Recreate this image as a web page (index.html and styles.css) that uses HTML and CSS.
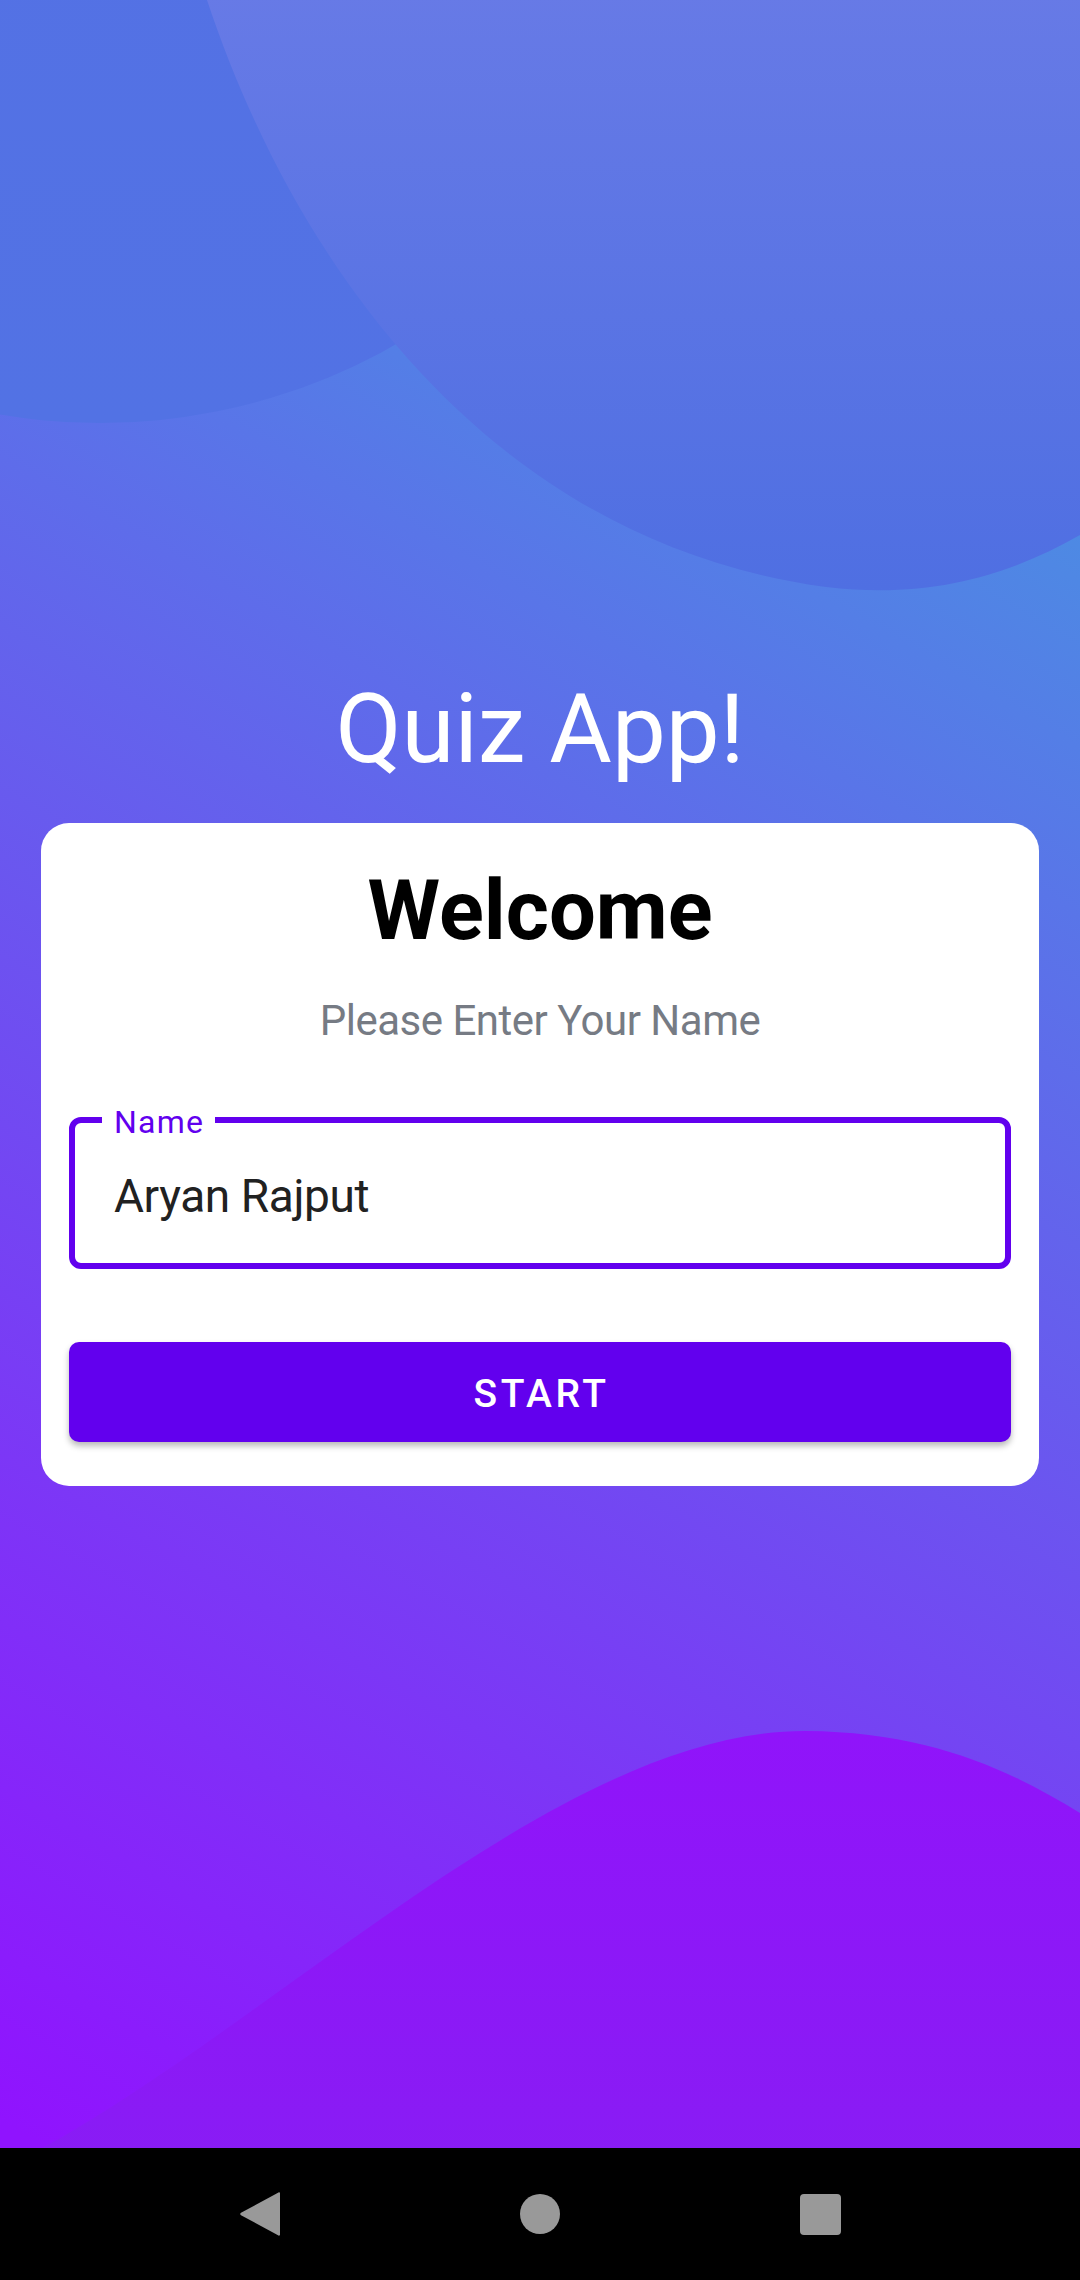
FILE: index.html
```html
<!DOCTYPE html>
<html lang="en">
<head>
<meta charset="utf-8">
<title>Quiz App</title>
<link rel="stylesheet" href="styles.css">
</head>
<body>
<div class="phone">
  <main class="screen">
    <svg class="bg-shapes" viewBox="0 0 1080 2148" preserveAspectRatio="none" aria-hidden="true">
      <defs>
        <linearGradient id="blobL" x1="0" y1="0" x2="0" y2="1">
          <stop offset="0" stop-color="#5670e4"/>
          <stop offset="1" stop-color="#5272e4"/>
        </linearGradient>
        <linearGradient id="blobR" x1="0" y1="0" x2="0" y2="1">
          <stop offset="0" stop-color="#677ae6"/>
          <stop offset="1" stop-color="#4f6fe2"/>
        </linearGradient>
        <linearGradient id="blobB" x1="0" y1="0" x2="0" y2="1">
          <stop offset="0" stop-color="#9014fa"/>
          <stop offset="1" stop-color="#891cf4"/>
        </linearGradient>
      </defs>
      <circle cx="100" cy="-173" r="596" fill="url(#blobL)"/>
      <path d="M200,-10 L207,0 C290,250 480,540 826,587 C935,600 1015,572 1080,535 L1080,-10 Z" fill="url(#blobR)"/>
      <path d="M0,2170 C250,2050 550,1730 806,1731 C930,1732 1010,1770 1080,1813 L1080,2148 L0,2148 Z" fill="url(#blobB)"/>
    </svg>

    <div class="content">
      <h1 class="title">Quiz App!</h1>
      <section class="card">
        <h2 class="welcome">Welcome</h2>
        <p class="subtitle">Please Enter Your Name</p>
        <div class="field">
          <span class="field-label">Name</span>
          <div class="field-input">Aryan Rajput</div>
        </div>
        <button class="start-btn" type="button">START</button>
      </section>
    </div>
  </main>

  <nav class="navbar">
    <svg class="nav-icon nav-back" viewBox="0 0 40 46" aria-hidden="true">
      <path d="M38.5,1.5 C39.3,1 40,1.6 40,2.5 L40,43.5 C40,44.4 39.3,45 38.5,44.5 L1,24.2 C0,23.6 0,22.4 1,21.8 Z" fill="#999"/>
    </svg>
    <span class="nav-home"></span>
    <span class="nav-recent"></span>
  </nav>
</div>
</body>
</html>
```

FILE: styles.css
```css
* {
  box-sizing: border-box;
}

html, body {
  margin: 0;
  padding: 0;
}

body {
  width: 1080px;
  height: 2280px;
  overflow: hidden;
  font-family: Roboto, "Noto Sans", "Liberation Sans", sans-serif;
  background: #000;
}

.phone {
  display: flex;
  flex-direction: column;
  width: 1080px;
  height: 2280px;
}

.screen {
  position: relative;
  height: 2148px;
  overflow: hidden;
  background: linear-gradient(210deg, #4a90e2 15%, #9013fe 99%);
}

.bg-shapes {
  position: absolute;
  left: 0;
  top: 0;
  width: 1080px;
  height: 2148px;
}

.content {
  position: relative;
  display: flex;
  flex-direction: column;
  align-items: center;
  padding: 673px 41px 0;
}

.title {
  margin: 0;
  font-size: 96px;
  font-weight: 400;
  line-height: 1.172;
  color: #ffffff;
}

.card {
  width: 998px;
  margin-top: 37px;
  padding: 39px 28px 44px;
  background: #ffffff;
  border-radius: 28px;
  display: flex;
  flex-direction: column;
  align-items: center;
}

.welcome {
  margin: 0;
  font-size: 83px;
  font-weight: 700;
  line-height: 1.172;
  color: #000000;
}

.subtitle {
  margin: 37px 0 0;
  font-size: 42px;
  font-weight: 400;
  line-height: 1.172;
  letter-spacing: -0.5px;
  color: #767b84;
}

.field {
  position: relative;
  width: 942px;
  height: 152px;
  margin-top: 72px;
  border: 6px solid #6200ee;
  border-radius: 12px;
  display: flex;
  align-items: center;
  padding: 8px 0 0 39px;
}

.field-label {
  position: absolute;
  left: 27px;
  top: -20px;
  padding: 0 11px 0 12px;
  background: #ffffff;
  font-size: 32px;
  line-height: 38px;
  letter-spacing: 1.2px;
  color: #6200ee;
}

.field-input {
  font-size: 46px;
  line-height: 1.172;
  letter-spacing: -0.4px;
  color: #212121;
}

.start-btn {
  width: 942px;
  height: 100px;
  margin-top: 73px;
  border: none;
  border-radius: 10px;
  background: #6200ee;
  color: #ffffff;
  font-family: Roboto, "Noto Sans", sans-serif;
  font-size: 39px;
  font-weight: 500;
  letter-spacing: 3.5px;
  line-height: 1.172;
  box-shadow: 0 4px 6px rgba(0, 0, 0, 0.28);
  padding: 5px 0 0 3px;
}

.navbar {
  height: 132px;
  background: #000000;
  display: flex;
  align-items: center;
  justify-content: center;
  gap: 240px;
}

.nav-back {
  width: 40px;
  height: 46px;
}

.nav-home {
  width: 40px;
  height: 40px;
  border-radius: 50%;
  background: #999999;
}

.nav-recent {
  width: 41px;
  height: 41px;
  border-radius: 4px;
  background: #999999;
}
```
